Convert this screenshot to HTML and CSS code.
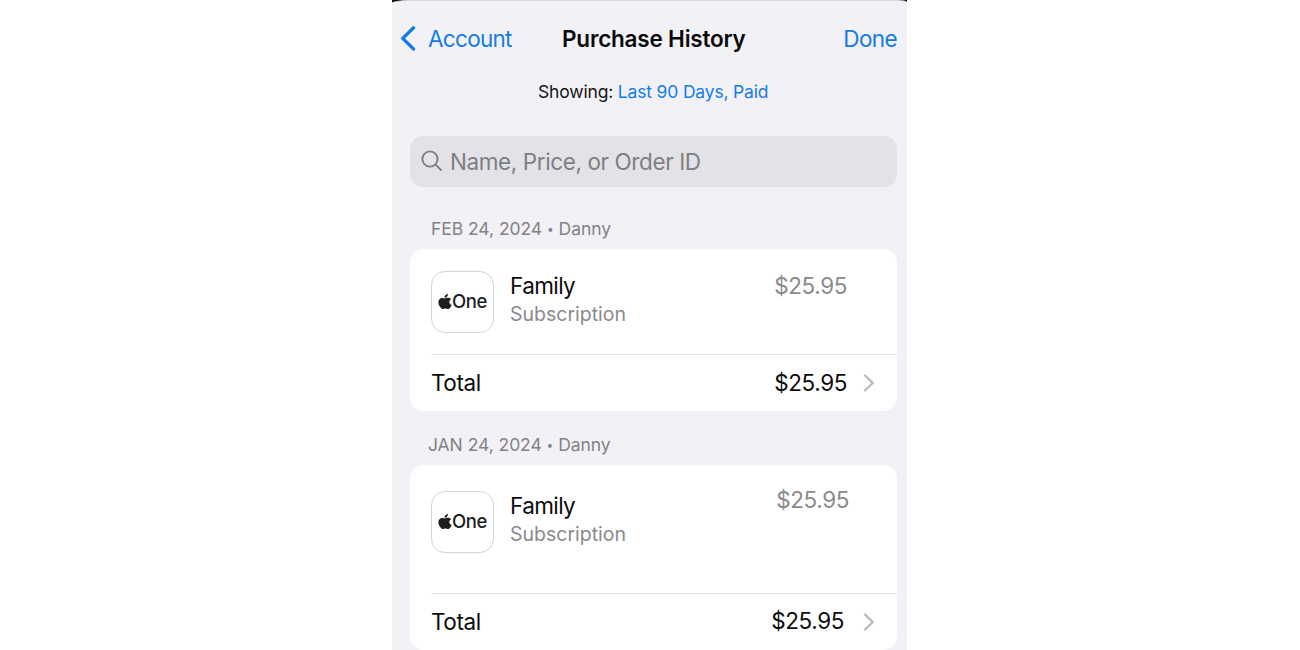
FILE: index.html
```html
<!DOCTYPE html>
<html lang="en">
<head>
  <meta charset="utf-8">
  <title>Purchase History</title>
  <link rel="stylesheet" href="styles.css">
</head>
<body>
  <svg width="0" height="0" class="symbols">
    <symbol id="apple" viewBox="0 0 24 28" preserveAspectRatio="none">
      <path d="M17 0c.2 2-.6 3.700-1.700 5-1.100 1.300-2.700 2-4.300 1.900C10.800 5 11.700 3.300 12.800 2.100 13.900.9 15.600.1 17 0z"/>
      <path d="M22.500 9.700c-2 1.200-3.100 3-3.100 5.100 0 2.600 1.500 4.700 4 5.700-.6 2-1.600 3.700-2.700 5.200-1 1.400-2.100 2.300-3.700 2.300-1.600 0-2.200-1-4.300-1-2 0-2.800 1-4.400 1-1.600 0-2.700-1.100-3.900-2.800C2.100 22.200.6 18.500.6 15.300c0-5 3.200-8 6.500-8 1.900 0 3.400 1.200 4.700 1.200 1.200 0 3-1.300 5.200-1.300 2.300 0 4.200.9 5.500 2.500z"/>
    </symbol>
    <symbol id="chevron" viewBox="0 0 12 18">
      <path d="M2 1.500 9.700 9 2 16.500" fill="none" stroke="currentColor" stroke-width="2.300" stroke-linecap="round" stroke-linejoin="round"/>
    </symbol>
  </svg>

  <div class="phone">
    <div class="sheet">
      <div class="nav">
        <a class="back">
          <svg width="18" height="28" viewBox="0 0 18 28"><path d="M13.600 3.800 2.700 14.400 13.600 25" fill="none" stroke="currentColor" stroke-width="3.300" stroke-linecap="round" stroke-linejoin="round"/></svg>
          <span>Account</span>
        </a>
        <h1>Purchase History</h1>
        <a class="done">Done</a>
      </div>

      <p class="filter">Showing: <a>Last 90 Days, Paid</a></p>

      <div class="search">
        <svg width="22" height="22" viewBox="0 0 22 22"><g fill="none" stroke="currentColor" stroke-width="1.900" stroke-linecap="round"><circle cx="9" cy="9" r="7.600"/><path d="M14.600 14.600 20 20"/></g></svg>
        <span>Name, Price, or Order ID</span>
      </div>

      <h2 class="date">FEB 24, 2024 <i>•</i> Danny</h2>
      <div class="card">
        <div class="item">
          <div class="app-icon"><svg width="14" height="15"><use href="#apple"/></svg><span>One</span></div>
          <div class="info">
            <p class="name">Family</p>
            <p class="type">Subscription</p>
          </div>
          <p class="price">$25.95</p>
        </div>
        <div class="total">
          <span class="label">Total</span>
          <span class="amount">$25.95</span>
          <svg width="12" height="18"><use href="#chevron"/></svg>
        </div>
      </div>

      <h2 class="date january">JAN 24, 2024 <i>•</i> Danny</h2>
      <div class="card january">
        <div class="item">
          <div class="app-icon"><svg width="14" height="15"><use href="#apple"/></svg><span>One</span></div>
          <div class="info">
            <p class="name">Family</p>
            <p class="type">Subscription</p>
          </div>
          <p class="price">$25.95</p>
        </div>
        <div class="total">
          <span class="label">Total</span>
          <span class="amount">$25.95</span>
          <svg width="12" height="18"><use href="#chevron"/></svg>
        </div>
      </div>
    </div>
  </div>
</body>
</html>
```

FILE: styles.css
```css
* {
  box-sizing: border-box;
}
body {
  margin: 0;
  background-color: #fff;
  font-family: Inter, "Liberation Sans", sans-serif;
  overflow: hidden;
}
h1, h2, p {
  margin: 0;
  font-weight: 400;
}
svg {
  flex: none;
}
.symbols {
  display: none;
}
.phone {
  width: 515px;
  height: 650px;
  margin-left: 392px;
  background-color: #111;
  overflow: hidden;
}
.sheet {
  height: 650px;
  padding: 1px 10px 0 18px;
  background-color: #f2f1f6;
  border-top: 1px solid #dcdbe0;
  border-radius: 18px 10px 0 0 / 3px 2px 0 0;
}
.nav {
  display: grid;
  grid-template-columns: 152px 1fr auto;
  align-items: center;
  height: 72px;
  margin-left: -10px;
  font-size: 22.5px;
  color: #147ce8;
}
.back {
  display: flex;
  align-items: center;
  gap: 10px;
  letter-spacing: -0.7px;
}
.nav h1 {
  padding-left: 10px;
  font-size: 22.5px;
  font-weight: 600;
  letter-spacing: -0.2px;
  color: #0a0a0a;
}
.done {
  letter-spacing: -0.6px;
}
.filter {
  height: 35px;
  padding-left: 128px;
  line-height: 36px;
  font-size: 17.5px;
  letter-spacing: -0.17px;
  color: #151515;
}
.filter a {
  color: #147ce8;
}
.search {
  display: flex;
  align-items: center;
  gap: 7px;
  height: 51px;
  margin-top: 27px;
  padding: 0 0 1px 11px;
  border-radius: 13px;
  background-color: #e3e2e7;
  color: #7e7e83;
  font-size: 22.5px;
  letter-spacing: -0.4px;
}
.date {
  height: 62px;
  padding: 31px 0 0 21px;
  line-height: 22px;
  font-size: 17.5px;
  letter-spacing: -0.05px;
  color: #828287;
}
.date i {
  font-style: normal;
  font-size: 12px;
  vertical-align: 2px;
}
.date.january {
  height: 54px;
  padding: 23px 0 0 18px;
}
.card {
  height: 162px;
  padding-left: 21px;
  border-radius: 14px;
  background-color: #fff;
}
.card.january {
  height: 185px;
}
.item {
  display: flex;
  height: 106px;
  padding: 22px 50px 0 0;
  border-bottom: 1px solid #e3e3e5;
}
.app-icon {
  display: flex;
  flex: none;
  align-items: center;
  justify-content: center;
  width: 63px;
  height: 62px;
  padding-bottom: 2px;
  border: 1px solid #d4d4d6;
  border-radius: 14px;
  font-size: 18.5px;
  font-weight: 500;
  letter-spacing: -0.4px;
  color: #1d1d1f;
  fill: #1d1d1f;
}
.info {
  flex: 1;
  padding-left: 16px;
}
.name {
  line-height: 30px;
  font-size: 22.5px;
  letter-spacing: -0.6px;
  color: #0c0c0c;
}
.type {
  line-height: 26px;
  font-size: 19.5px;
  color: #8a8a8d;
}
.price {
  line-height: 30px;
  font-size: 22.5px;
  letter-spacing: -0.4px;
  color: #8a8a8d;
}
.total {
  display: flex;
  align-items: center;
  height: 56px;
  padding-right: 22px;
  font-size: 22.5px;
  letter-spacing: -0.4px;
  color: #0c0c0c;
}
.total svg {
  margin-left: 16px;
  color: #b9b9bc;
}
.label, .amount {
  padding-bottom: 2px;
}
.amount {
  margin-left: auto;
}
.january .item {
  height: 129px;
  padding: 26px 48px 0 0;
}
.january .price {
  margin-top: -6px;
}
.january .amount {
  margin-right: 3px;
  padding-bottom: 3px;
}
```
